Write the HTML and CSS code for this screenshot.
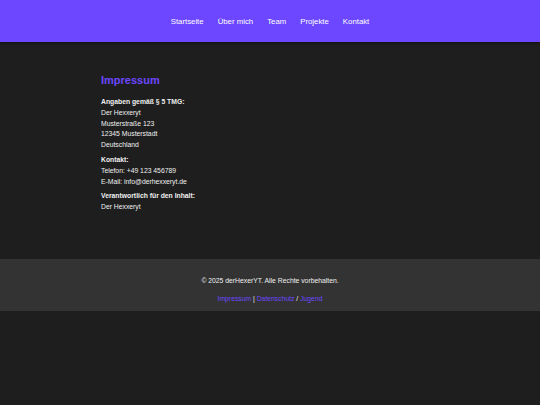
FILE: index.html
```html
<!DOCTYPE html>
<html lang="de">
<head>
<meta charset="utf-8">
<title>Impressum</title>
<link rel="stylesheet" href="styles.css">
</head>
<body>
<header class="site-header">
  <nav class="nav">
    <a href="#">Startseite</a>
    <a href="#">Über mich</a>
    <a href="#">Team</a>
    <a href="#">Projekte</a>
    <a href="#">Kontakt</a>
  </nav>
</header>
<main class="content">
  <h1 class="title">Impressum</h1>
  <p class="block"><strong>Angaben gemäß § 5 TMG:</strong><br>Der Hexxeryt<br>Musterstraße 123<br>12345 Musterstadt<br>Deutschland</p>
  <p class="block"><strong>Kontakt:</strong><br>Telefon: +49 123 456789<br>E-Mail: info@derhexxeryt.de</p>
  <p class="block"><strong>Verantwortlich für den Inhalt:</strong><br>Der Hexxeryt</p>
</main>
<footer class="site-footer">
  <p class="copy">© 2025 derHexerYT. Alle Rechte vorbehalten.</p>
  <p class="links"><a href="#">Impressum</a> | <a href="#">Datenschutz</a> / <a href="#">Jugend</a></p>
</footer>
</body>
</html>
```
FILE: styles.css
```css
html, body {
  margin: 0;
  padding: 0;
  background: #1e1e1e;
  color: #f0f0f0;
  font-family: "Liberation Sans", Arial, sans-serif;
}
.site-header {
  background: #6c47ff;
  height: 42px;
  display: flex;
  align-items: center;
  justify-content: center;
  box-shadow: 0 1px 3px rgba(0,0,0,0.5);
}
.nav {
  display: flex;
  gap: 14px;
  font-size: 7.8px;
}
.nav a {
  color: #ffffff;
  text-decoration: none;
}
.content {
  box-sizing: border-box;
  width: 338px;
  min-height: 217px;
  margin: 0 auto;
  padding: 31px 0 20px;
}
.title {
  color: #6c47ff;
  font-size: 11px;
  margin: 0 0 10px;
  line-height: 14px;
}
.block {
  font-size: 6.8px;
  line-height: 10.8px;
  margin: 0 0 4px;
}
.block strong {
  font-weight: bold;
}
.site-footer {
  background: #333333;
  text-align: center;
  padding: 15.5px 0 7.5px;
  font-size: 6.8px;
  line-height: 11px;
}
.site-footer p {
  margin: 0;
}
.site-footer .copy {
  margin-bottom: 7px;
}
.links a {
  color: #6c47ff;
  text-decoration: none;
}
```
